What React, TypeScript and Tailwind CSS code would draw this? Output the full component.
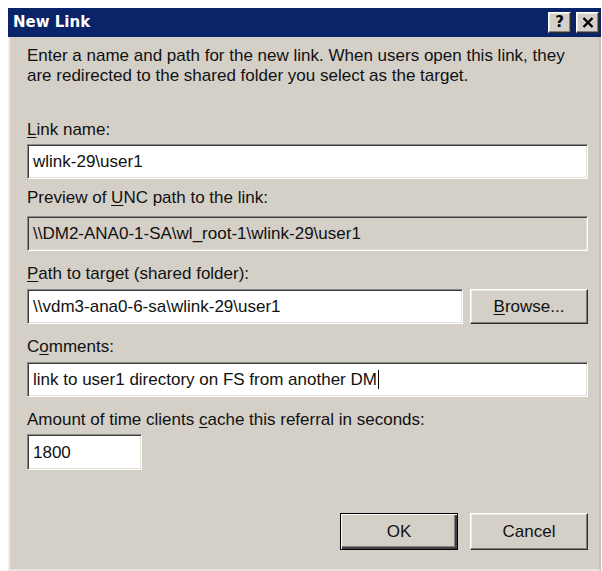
import React from "react";

const sunken =
  "border border-t-[#8a8a8a] border-l-[#8a8a8a] border-b-white border-r-white shadow-[inset_1px_1px_0_#3c3c3c,inset_-1px_-1px_0_#e4e1da]";

const raised =
  "border border-t-white border-l-white border-b-[#2e2e2e] border-r-[#2e2e2e] shadow-[inset_-1px_-1px_0_#808080,inset_1px_1px_0_#ecebe6]";

function Field({
  value,
  disabled,
  caret,
  className = "",
}: {
  value: string;
  disabled?: boolean;
  caret?: boolean;
  className?: string;
}) {
  return (
    <div
      className={`${sunken} h-[35px] flex items-center pl-[5px] ${
        disabled ? "bg-[#d4d0c8]" : "bg-white"
      } ${className}`}
    >
      <span className="whitespace-pre leading-none">{value}</span>
      {caret && <span className="ml-[1px] w-[1px] h-[19px] bg-black" />}
    </div>
  );
}

function Label({ before, key_, after, className = "" }: { before: string; key_: string; after: string; className?: string }) {
  return (
    <div className={`h-[20px] leading-[20px] whitespace-pre ${className}`}>
      {before}
      <span className="underline underline-offset-[2px] decoration-1">{key_}</span>
      {after}
    </div>
  );
}

function TitleButton({ children }: { children: React.ReactNode }) {
  return (
    <div
      className={`w-[23px] h-[21px] bg-[#d4d0c8] ${raised} flex items-center justify-center text-black font-bold text-[15px] leading-none`}
      style={{ fontFamily: '"DejaVu Sans", sans-serif' }}
    >
      {children}
    </div>
  );
}

export default function App() {
  return (
    <div
      className="w-[602px] h-[571px] bg-white pt-[8px] pl-[8px] overflow-hidden text-[17px] text-[#111]"
      style={{ fontFamily: '"Liberation Sans", Arial, sans-serif' }}
    >
      <div className="w-[593px] h-[563px] bg-[#d4d0c8] flex flex-col">
        {/* caption bar */}
        <div className="h-[29px] bg-[#0a246a] flex items-center pl-[5px] pr-[2px]">
          <span
            className="text-white font-bold text-[15px] leading-none"
            style={{ fontFamily: '"DejaVu Sans", sans-serif' }}
          >
            New Link
          </span>
          <div className="ml-auto flex gap-[5px]">
            <TitleButton>?</TitleButton>
            <TitleButton>
              <svg width="12" height="11" viewBox="0 0 12 11">
                <path d="M1.5 1 L10.5 10 M10.5 1 L1.5 10" stroke="#000" strokeWidth="2.4" />
              </svg>
            </TitleButton>
          </div>
        </div>

        {/* dialog body */}
        <div className="flex-1 flex flex-col pl-[17px] pr-[11px] border-l-2 border-l-[#efede8] border-r-2 border-r-[#c4c1ba] border-b-2 border-b-[#e8e6e0]">
          <div className="mt-[9px] leading-[20px]">
            <div className="whitespace-pre">Enter a name and path for the new link. When users open this link, they</div>
            <div className="whitespace-pre">are redirected to the shared folder you select as the target.</div>
          </div>

          <Label className="mt-[34px]" before="" key_="L" after="ink name:" />
          <Field className="mt-[4px]" value="wlink-29\user1" />

          <Label className="mt-[9px]" before="Preview of " key_="U" after="NC path to the link:" />
          <Field className="mt-[8px]" value="\\DM2-ANA0-1-SA\wl_root-1\wlink-29\user1" disabled />

          <Label className="mt-[13px]" before="" key_="P" after="ath to target (shared folder):" />
          <div className="mt-[5px] flex gap-[7px]">
            <Field className="w-[436px]" value="\\vdm3-ana0-6-sa\wlink-29\user1" />
            <div className={`w-[118px] h-[35px] ${raised} flex items-center justify-center`}>
              <span>
                <span className="underline underline-offset-[2px] decoration-1">B</span>rowse...
              </span>
            </div>
          </div>

          <Label className="mt-[13px]" before="C" key_="o" after="mments:" />
          <Field className="mt-[5px]" value="link to user1 directory on FS from another DM" caret />

          <Label className="mt-[13px]" before="Amount of time clients " key_="c" after="ache this referral in seconds:" />
          <Field className="mt-[4px] w-[115px] h-[36px]" value="1800" />

          <div className="mt-[43px] flex justify-end gap-[12px]">
            <div className="w-[118px] h-[37px] border border-black shadow-[inset_1px_1px_0_#fff,inset_-2px_-2px_0_#404040,inset_-3px_-3px_0_#808080] flex items-center justify-center">
              OK
            </div>
            <div className={`w-[118px] h-[37px] ${raised} flex items-center justify-center`}>Cancel</div>
          </div>
        </div>
      </div>
    </div>
  );
}
